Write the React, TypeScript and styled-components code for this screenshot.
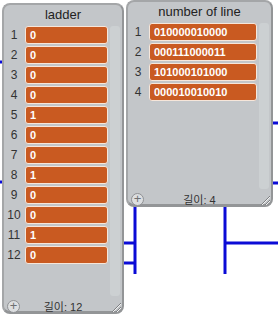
import React from 'react';
import styled, { createGlobalStyle } from 'styled-components';

const GlobalStyle = createGlobalStyle`
  html, body {
    margin: 0;
    padding: 0;
    background: #fff;
  }
  body {
    font-family: 'Liberation Sans', Arial, sans-serif;
  }
`;

const ladder = ['0', '0', '0', '0', '1', '0', '0', '1', '0', '0', '1', '0'];
const lines = ['010000010000', '000111000011', '101000101000', '000010010010'];

const Wire: React.FC = () => (
  <Wires width={278} height={317} viewBox="0 0 278 317">
    <g stroke="#0b0bd6" strokeWidth={3} fill="none">
      <line x1={0} y1={62} x2={10} y2={62} />
      <line x1={0} y1={182} x2={10} y2={182} />
      <line x1={135} y1={200} x2={135} y2={274} />
      <line x1={118} y1={243} x2={135} y2={243} />
      <line x1={118} y1={263} x2={135} y2={263} />
      <line x1={225} y1={200} x2={225} y2={274} />
      <line x1={225} y1={243} x2={278} y2={243} />
      <line x1={262} y1={123} x2={278} y2={123} />
      <line x1={262} y1={183} x2={278} y2={183} />
    </g>
  </Wires>
);

const Resize: React.FC = () => (
  <Grip width={10} height={10} viewBox="0 0 10 10">
    <g stroke="#7d7f82" strokeWidth={1}>
      <line x1={1} y1={10} x2={10} y2={1} />
      <line x1={5} y1={10} x2={10} y2={5} />
    </g>
    <g stroke="#f2f2f2" strokeWidth={1}>
      <line x1={2} y1={10} x2={10} y2={2} />
      <line x1={6} y1={10} x2={10} y2={6} />
    </g>
  </Grip>
);

type WatcherProps = {
  title: string;
  items: string[];
  width: number;
  height: number;
  top: number;
  cellWidth: number;
};

const ListWatcher: React.FC<WatcherProps> = ({ title, items, width, height, top, cellWidth }) => (
  <Panel $width={width} $height={height} $top={top}>
    <Title>{title}</Title>
    <Body>
      <Rows>
        {items.map((v, i) => (
          <Row key={i}>
            <Index>{i + 1}</Index>
            <Cell $width={cellWidth}>{v}</Cell>
          </Row>
        ))}
      </Rows>
      <Track />
    </Body>
    <Footer>
      <Plus>+</Plus>
      <Length>길이: {items.length}</Length>
      <Resize />
    </Footer>
  </Panel>
);

const App: React.FC = () => (
  <>
    <GlobalStyle />
    <Stage>
      <Wire />
      <Watchers>
        <ListWatcher title="ladder" items={ladder} width={122} height={311} top={3} cellWidth={83} />
        <ListWatcher title="number of line" items={lines} width={147} height={207} top={0} cellWidth={108} />
      </Watchers>
    </Stage>
  </>
);

export default App;

const Stage = styled.div`
  position: relative;
  width: 278px;
  height: 317px;
  overflow: hidden;
`;

const Wires = styled.svg`
  position: absolute;
  left: 0;
  top: 0;
`;

const Watchers = styled.div`
  position: relative;
  display: flex;
  align-items: flex-start;
  gap: 2px;
  padding-left: 2px;
`;

const Panel = styled.div<{ $width: number; $height: number; $top: number }>`
  box-sizing: border-box;
  display: flex;
  flex-direction: column;
  width: ${({ $width }) => $width}px;
  height: ${({ $height }) => $height}px;
  margin-top: ${({ $top }) => $top}px;
  border: 2px solid #a4a6a8;
  border-right-color: #939597;
  border-bottom: 3px solid #939597;
  border-radius: 8px;
  background: #c3c6c9;
`;

const Title = styled.div`
  height: 20px;
  padding-top: 1px;
  line-height: 18px;
  text-align: center;
  font-size: 13px;
  color: #222;
`;

const Body = styled.div`
  flex: 1;
  display: flex;
  padding-right: 2px;
`;

const Rows = styled.div`
  flex: 1;
  display: flex;
  flex-direction: column;
  gap: 2px;
`;

const Row = styled.div`
  display: flex;
  align-items: center;
  height: 18px;
`;

const Index = styled.div`
  width: 20px;
  margin-right: 1px;
  text-align: center;
  font-size: 12px;
  color: #333;
`;

const Cell = styled.div<{ $width: number }>`
  box-sizing: border-box;
  width: ${({ $width }) => $width}px;
  height: 18px;
  padding-left: 4px;
  line-height: 16px;
  border: 1px solid #f6e6da;
  border-radius: 3px;
  background: #c95a21;
  color: #fff;
  font-size: 11px;
  font-weight: bold;
`;

const Track = styled.div`
  width: 10px;
  margin-bottom: 4px;
  border-radius: 3px;
  background: #ccd0d2;
`;

const Footer = styled.div`
  position: relative;
  height: 12px;
  margin-bottom: -1px;
  display: flex;
  align-items: center;
  justify-content: center;
`;

const Plus = styled.div`
  position: absolute;
  left: 3px;
  top: 0;
  box-sizing: border-box;
  width: 13px;
  height: 13px;
  border: 1px solid #8f9194;
  border-radius: 50%;
  background: #dcdee0;
  color: #6d6f72;
  font-size: 13px;
  line-height: 10px;
  text-align: center;
`;

const Length = styled.div`
  font-family: 'Liberation Sans', 'Noto Sans CJK KR', sans-serif;
  font-size: 11px;
  color: #333;
`;

const Grip = styled.svg`
  position: absolute;
  right: 1px;
  bottom: 0;
`;
